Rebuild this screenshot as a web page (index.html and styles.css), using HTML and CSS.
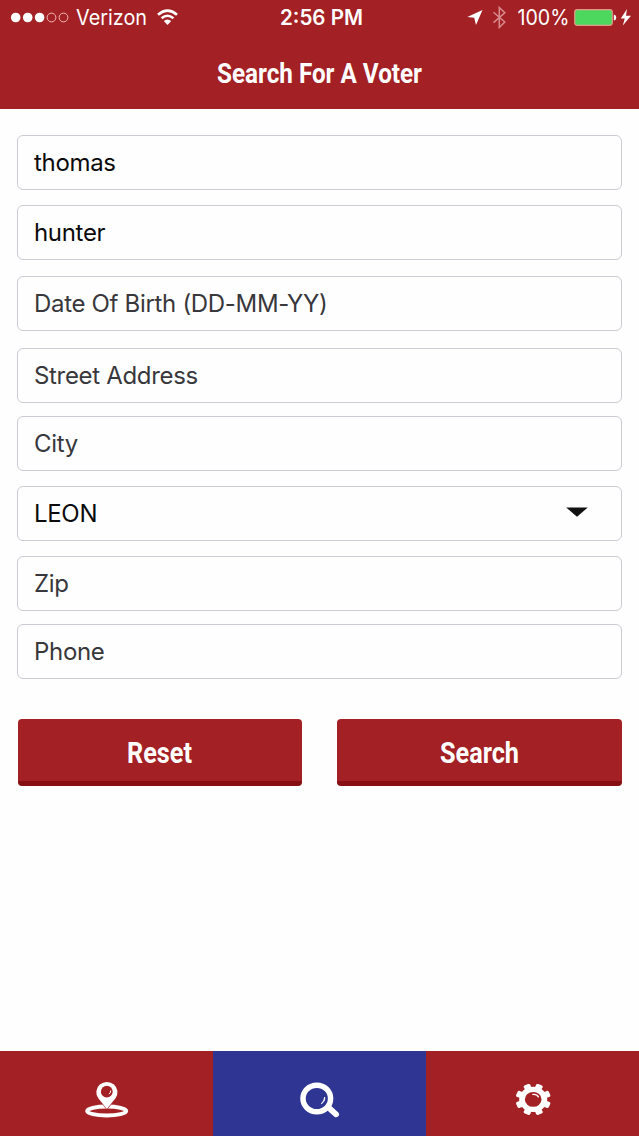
FILE: index.html
```html
<!DOCTYPE html>
<html lang="en">
<head>
<meta charset="utf-8">
<title>Search For A Voter</title>
<link rel="stylesheet" href="styles.css">
</head>
<body>
<div class="app">
  <header class="header">
    <svg class="status" width="639" height="36" viewBox="0 0 639 36">
      <g fill="#fff" stroke="none">
        <circle cx="15.7" cy="17.5" r="4.8"/><circle cx="27.7" cy="17.5" r="4.8"/><circle cx="39.6" cy="17.5" r="4.8"/>
      </g>
      <g fill="none" stroke="#f3b9b3" stroke-width="1"><circle cx="51.5" cy="17.5" r="4.4"/><circle cx="63.5" cy="17.5" r="4.4"/></g>
      <text class="status-text" x="76" y="25" textLength="71" lengthAdjust="spacingAndGlyphs">Verizon</text>
      <g fill="none" stroke="#fff" stroke-width="2.6">
        <path d="M158 14.7Q167.5 6.5 177 14.7"/><path d="M161.6 18.3Q167.5 13.2 173.4 18.3"/>
      </g>
      <path d="M163.8 21Q167.5 17.8 171.2 21L167.5 25Z" fill="#fff"/>
      <text class="status-text status-time" x="280" y="25" textLength="83" lengthAdjust="spacingAndGlyphs">2:56 PM</text>
      <path d="M482.5 10L476 25L474.2 17.8L467.3 17Z" fill="#fff"/>
      <path d="M493.5 12.2L504.8 22L499.3 27.5V7.5L504.8 12.8L493.5 22.6" fill="none" stroke="#d98c8d" stroke-width="1.5"/>
      <text class="status-text" x="517.5" y="25" textLength="52" lengthAdjust="spacingAndGlyphs">100%</text>
      <rect x="574.7" y="9.7" width="37.6" height="15.6" rx="2.5" fill="#4cd85f" stroke="#df9b87" stroke-width="1.2"/>
      <path d="M613.8 14.5Q616.3 15 616.3 17.5T613.8 20.5Z" fill="#fff"/>
      <path d="M627 9L620.8 18.5H624.8L622.8 25.5L631 15.8H626Z" fill="#fff"/>
    </svg>
    <h1 class="title"><svg width="216" height="40" viewBox="-5 0 216 40"><text class="condensed title-text" x="0" y="28.5" textLength="205" lengthAdjust="spacingAndGlyphs">Search For A Voter</text></svg></h1>
  </header>

  <main class="form">
    <div class="field filled">thomas</div>
    <div class="field filled">hunter</div>
    <div class="field">Date Of Birth (DD-MM-YY)</div>
    <div class="field">Street Address</div>
    <div class="field">City</div>
    <div class="field filled select">LEON
      <svg width="22" height="10" viewBox="0 0 22 10"><path d="M.2 .5H21.8L11 9.7Z" fill="#111"/></svg></div>
    <div class="field">Zip</div>
    <div class="field">Phone</div>
    <div class="buttons">
      <div class="button"><svg width="80" height="44" viewBox="-6 0 80 44"><text class="condensed button-text" x="1" y="32.5" textLength="65" lengthAdjust="spacingAndGlyphs">Reset</text></svg></div>
      <div class="button"><svg width="94" height="44" viewBox="-6 0 94 44"><text class="condensed button-text" x="1" y="32.5" textLength="79" lengthAdjust="spacingAndGlyphs">Search</text></svg></div>
    </div>
  </main>

  <nav class="tabs">
    <div class="tab">
      <svg width="48" height="40" viewBox="82.5 1080 48 40">
        <ellipse cx="106.2" cy="1111" rx="19.6" ry="4.5" fill="none" stroke="#fff" stroke-width="3.8"/>
        <path d="M106.4 1109L97.8 1098.2A10.6 10.3 0 1 1 115 1098.2Z" fill="#fff" stroke="#a32024" stroke-width="1.2" paint-order="stroke"/>
        <circle cx="106.3" cy="1091.7" r="5.9" fill="#a32024"/>
        <path d="M110.2 1090.5Q110.3 1093.2 108.4 1094.2" fill="none" stroke="#fff" stroke-width="1"/>
      </svg>
    </div>
    <div class="tab active">
      <svg width="46" height="40" viewBox="297 1079.5 46 40">
        <path d="M328.5 1107L336.1 1113.8" stroke="#fff" stroke-width="5.8" stroke-linecap="round"/>
        <ellipse cx="316.8" cy="1098" rx="13.8" ry="13.3" fill="none" stroke="#fff" stroke-width="5.5"/>
        <path d="M324.7 1096.5Q325.2 1101 321.3 1103.3Q324.2 1100.4 324.7 1096.5Z" fill="#fff" stroke="#fff" stroke-width=".8"/>
      </svg>
    </div>
    <div class="tab">
      <svg width="40" height="40" viewBox="513 1080 40 40">
        <g transform="translate(533.2 1099.4) scale(1.08 .97)">
          <circle r="13" fill="#fff"/>
          <g stroke="#fff" stroke-width="6.6">
            <path d="M0-13.6V13.6" transform="rotate(22.5)"/><path d="M0-13.6V13.6" transform="rotate(67.5)"/><path d="M0-13.6V13.6" transform="rotate(112.5)"/><path d="M0-13.6V13.6" transform="rotate(157.5)"/>
          </g>
          <g stroke="#fff" stroke-width="3.6" stroke-linecap="round">
            <path d="M-1.6-14.6H1.6M-1.6 14.6H1.6" transform="rotate(22.5)"/><path d="M-1.6-14.6H1.6M-1.6 14.6H1.6" transform="rotate(67.5)"/><path d="M-1.6-14.6H1.6M-1.6 14.6H1.6" transform="rotate(112.5)"/><path d="M-1.6-14.6H1.6M-1.6 14.6H1.6" transform="rotate(157.5)"/>
          </g>
          <circle r="7.7" fill="#a32024"/>
          <path d="M-.3-5.2Q3.8-5.4 4.8-2.5" fill="none" stroke="#fff" stroke-width="1.3" stroke-linecap="round"/>
        </g>
      </svg>
    </div>
  </nav>
</div>
</body>
</html>
```
FILE: styles.css
```css
* { box-sizing: border-box; }
body { margin: 0; background: #fefefe; font-family: Inter, "Liberation Sans", sans-serif; }
svg { display: block; flex: none; overflow: visible; }
.app { width: 639px; height: 1136px; display: flex; flex-direction: column; }
.header { height: 109px; background: #a32024; }
.title { margin: 0; padding-top: 18px; display: flex; justify-content: center; }
.status-text { font: 400 21px Inter, sans-serif; fill: #fff; }
.status-time { font-weight: 600; }
.condensed { font-family: Roboto, sans-serif; font-weight: 700; fill: #fff; }
.title-text { font-size: 28px; }
.button-text { font-size: 30px; }
.form { flex: 1; padding: 26px 17px 0; display: grid; align-content: start; grid-template-rows: 70px 71px 72px 68px 70px 70px 68px 95px auto; }
.field { height: 55px; display: flex; align-items: center; justify-content: space-between; padding: 1px 33px 0 16px; border: 1.5px solid #cdcad3; border-radius: 6px; background: #fefefe; color: #38373c; font-size: 24px; line-height: 30px; letter-spacing: -0.32px; }
.filled { color: #0b0b0d; }
.select svg { margin-top: -4px; }
.buttons { display: flex; gap: 35px; padding-left: 0.5px; }
.button { flex: 1; height: 67px; display: flex; justify-content: center; padding-top: 11px; background: #a32024; border-bottom: 5px solid #861014; border-radius: 4px; }
.tabs { height: 85.5px; display: grid; grid-template-columns: repeat(3, 1fr); }
.tab { display: flex; justify-content: center; padding-top: 29.5px; background: #a32024; }
.active { background: #2e3592; }
```
